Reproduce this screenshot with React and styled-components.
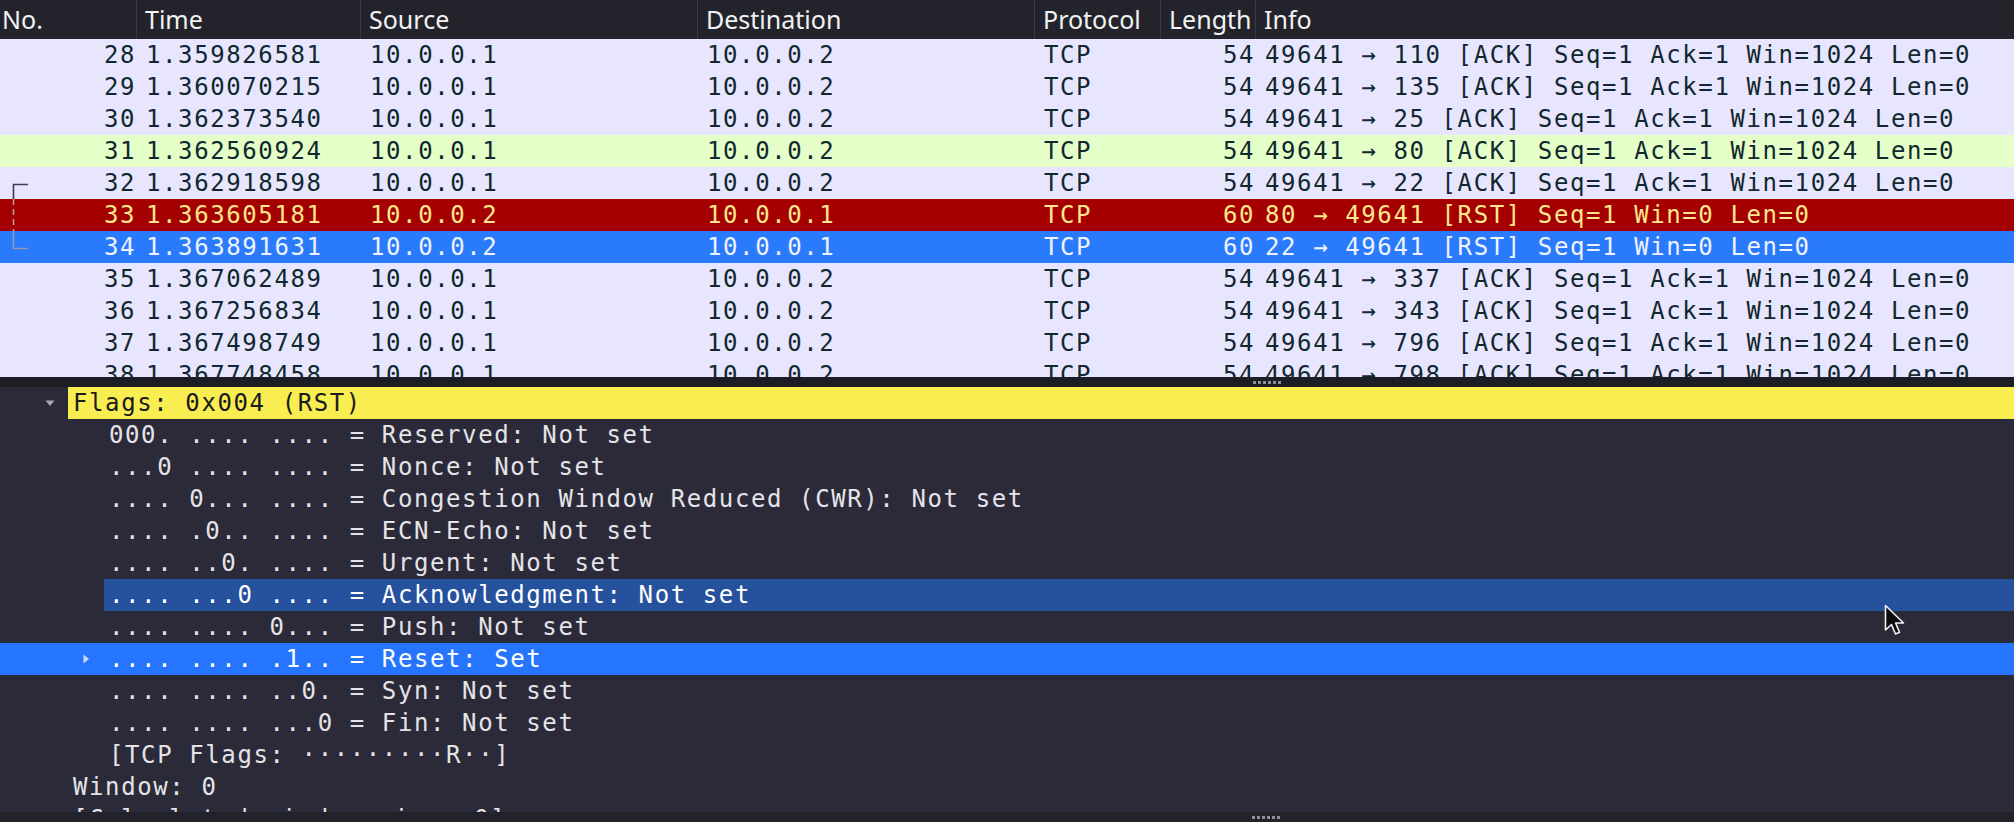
import React from 'react';
import styled, { createGlobalStyle } from 'styled-components';

const MONO = `"DejaVu Sans Mono", "Liberation Mono", monospace`;
const SANS = `"Noto Sans", "Open Sans", sans-serif`;
const COLUMNS = '136px 224px 337px 337px 126px 95px 1fr';

const TONES = {
  tcp: { bg: '#e7e6fe', fg: '#12272e' },
  http: { bg: '#e4ffc7', fg: '#12272e' },
  rst: { bg: '#a40000', fg: '#fde68e' },
  selected: { bg: '#2a7afd', fg: '#eef3ff' },
};

const packets = [
  { no: 28, time: '1.359826581', port: 110 },
  { no: 29, time: '1.360070215', port: 135 },
  { no: 30, time: '1.362373540', port: 25 },
  { no: 31, time: '1.362560924', port: 80, tone: 'http' },
  { no: 32, time: '1.362918598', port: 22, mark: 'start' },
  {
    no: 33, time: '1.363605181', src: '10.0.0.2', dst: '10.0.0.1', len: 60,
    info: '80 → 49641 [RST] Seq=1 Win=0 Len=0', tone: 'rst', mark: 'mid',
  },
  {
    no: 34, time: '1.363891631', src: '10.0.0.2', dst: '10.0.0.1', len: 60,
    info: '22 → 49641 [RST] Seq=1 Win=0 Len=0', tone: 'selected', mark: 'end',
  },
  { no: 35, time: '1.367062489', port: 337 },
  { no: 36, time: '1.367256834', port: 343 },
  { no: 37, time: '1.367498749', port: 796 },
  { no: 38, time: '1.367748458', port: 798 },
];

const tree = [
  { level: 1, text: 'Flags: 0x004 (RST)', open: true, mark: 'flag' },
  { level: 2, text: '000. .... .... = Reserved: Not set' },
  { level: 2, text: '...0 .... .... = Nonce: Not set' },
  { level: 2, text: '.... 0... .... = Congestion Window Reduced (CWR): Not set' },
  { level: 2, text: '.... .0.. .... = ECN-Echo: Not set' },
  { level: 2, text: '.... ..0. .... = Urgent: Not set' },
  { level: 2, text: '.... ...0 .... = Acknowledgment: Not set', mark: 'related' },
  { level: 2, text: '.... .... 0... = Push: Not set' },
  { level: 2, text: '.... .... .1.. = Reset: Set', closed: true, selected: true },
  { level: 2, text: '.... .... ..0. = Syn: Not set' },
  { level: 2, text: '.... .... ...0 = Fin: Not set' },
  { level: 2, text: '[TCP Flags: ·········R··]' },
  { level: 1, text: 'Window: 0' },
  { level: 1, text: '[Calculated window size: 0]' },
];

const GlobalStyle = createGlobalStyle`
  html, body {
    margin: 0;
    padding: 0;
    background: #2b2a39;
    overflow: hidden;
  }
`;

const Window = styled.div`
  position: relative;
  width: 2014px;
  height: 822px;
  display: flex;
  flex-direction: column;
  background: #2b2a39;
  overflow: hidden;
`;

const ListPane = styled.section`
  display: flex;
  flex-direction: column;
  height: 377px;
  background: #e7e6fe;
  overflow: hidden;
`;

const HeaderRow = styled.div`
  display: grid;
  grid-template-columns: ${COLUMNS};
  height: 39px;
  flex-shrink: 0;
  background: #23242b;
`;

const HeaderCell = styled.div`
  font-family: ${SANS};
  font-size: 25px;
  line-height: 39px;
  color: #f2f2f4;
  padding-left: ${(p) => (p.$first ? '2px' : '8px')};
  border-left: ${(p) => (p.$first ? 'none' : '1px solid #393a44')};
  white-space: nowrap;
  overflow: hidden;
`;

const PacketRow = styled.div`
  display: grid;
  grid-template-columns: ${COLUMNS};
  height: 32px;
  flex-shrink: 0;
  background: ${(p) => TONES[p.$tone].bg};
  color: ${(p) => TONES[p.$tone].fg};
  font-family: ${MONO};
  font-size: 24px;
  letter-spacing: 1.6px;
  line-height: 32px;
`;

const Cell = styled.div`
  position: relative;
  white-space: pre;
  overflow: hidden;
  text-align: ${(p) => (p.$right ? 'right' : 'left')};
  padding-left: ${(p) => (p.$right ? '0' : '10px')};
`;

const MarkSvg = styled.svg`
  position: absolute;
  left: 0;
  top: 0;
`;

const Splitter = styled.div`
  height: 10px;
  flex-shrink: 0;
  display: flex;
  align-items: center;
  padding-left: ${(p) => p.$grip}px;
  background: #1d1e24;
`;

const Grip = styled.div`
  display: flex;
  gap: 2px;
`;

const GripDot = styled.span`
  width: 3px;
  height: 3px;
  background: #8d8e96;
`;

const DetailPane = styled.section`
  flex: 1;
  overflow: hidden;
  background: #2b2a39;
`;

const TreeRow = styled.div`
  display: flex;
  align-items: center;
  height: 32px;
  padding-left: ${(p) => p.$level * 36}px;
  background: ${(p) => (p.$selected ? '#2575fe' : 'transparent')};
`;

const Expander = styled.div`
  width: 32px;
  height: 32px;
  flex-shrink: 0;
  display: flex;
  align-items: center;
  padding-left: 8px;
  box-sizing: border-box;
`;

const Label = styled.div`
  flex: 1;
  height: 32px;
  padding-left: 5px;
  font-family: ${MONO};
  font-size: 24px;
  letter-spacing: 1.6px;
  line-height: 32px;
  white-space: pre;
  background: ${(p) => (p.$mark === 'flag' ? '#f8ee52' : p.$mark === 'related' ? '#26519d' : 'transparent')};
  color: ${(p) => (p.$mark === 'flag' ? '#1b1b1b' : p.$selected || p.$mark ? '#ffffff' : '#e4e4e8')};
`;

const BottomBar = styled(Splitter)`
  background: #22232a;
`;

const Pointer = styled.svg`
  position: absolute;
  left: 1884px;
  top: 604px;
`;

const GripHandle = () => (
  <Grip>
    {[0, 1, 2, 3, 4, 5].map((i) => (
      <GripDot key={i} />
    ))}
  </Grip>
);

const RelatedMark = ({ kind }) => {
  if (kind === 'start') {
    return (
      <MarkSvg width="34" height="32">
        <path d="M28 17.5 H13.5 V32" fill="none" stroke="#3d3e49" strokeWidth="1.6" />
      </MarkSvg>
    );
  }
  if (kind === 'mid') {
    return (
      <MarkSvg width="34" height="32">
        <path d="M13.5 0 V32" fill="none" stroke="#b29a98" strokeWidth="1.6" strokeDasharray="6 4" />
      </MarkSvg>
    );
  }
  return (
    <MarkSvg width="34" height="32">
      <path d="M13.5 0 V17.5 H28" fill="none" stroke="#8f98ad" strokeWidth="1.6" />
    </MarkSvg>
  );
};

const Triangle = ({ open }) => (
  <svg width="12" height="12" viewBox="0 0 12 12">
    {open ? (
      <path d="M1.5 3.5 L10.5 3.5 L6 9 Z" fill="#a9a9b3" />
    ) : (
      <path d="M3.5 1.5 L9 6 L3.5 10.5 Z" fill="#c9d8ff" />
    )}
  </svg>
);

const headers = ['No.', 'Time', 'Source', 'Destination', 'Protocol', 'Length', 'Info'];

const App = () => (
  <>
    <GlobalStyle />
    <Window>
      <ListPane>
        <HeaderRow>
          {headers.map((h, i) => (
            <HeaderCell key={h} $first={i === 0}>
              {h}
            </HeaderCell>
          ))}
        </HeaderRow>
        {packets.map((p) => (
          <PacketRow key={p.no} $tone={p.tone || 'tcp'}>
            <Cell $right>
              {p.mark && <RelatedMark kind={p.mark} />}
              {p.no}
            </Cell>
            <Cell>{p.time}</Cell>
            <Cell>{p.src || '10.0.0.1'}</Cell>
            <Cell>{p.dst || '10.0.0.2'}</Cell>
            <Cell>TCP</Cell>
            <Cell $right>{p.len || 54}</Cell>
            <Cell>{p.info || `49641 → ${p.port} [ACK] Seq=1 Ack=1 Win=1024 Len=0`}</Cell>
          </PacketRow>
        ))}
      </ListPane>
      <Splitter $grip={1253}>
        <GripHandle />
      </Splitter>
      <DetailPane>
        {tree.map((t, i) => (
          <TreeRow key={i} $level={t.level} $selected={t.selected}>
            <Expander>
              {t.open && <Triangle open />}
              {t.closed && <Triangle />}
            </Expander>
            <Label $mark={t.mark} $selected={t.selected}>
              {t.text}
            </Label>
          </TreeRow>
        ))}
      </DetailPane>
      <BottomBar $grip={1252}>
        <GripHandle />
      </BottomBar>
      <Pointer width="24" height="34" viewBox="0 0 24 34">
        <path
          d="M1.5 1.5 L1.5 26 L7.5 20.5 L11.5 30 L15.5 28.3 L11.6 19 L19.5 19 Z"
          fill="#0d0d0d"
          stroke="#f2f2f2"
          strokeWidth="1.6"
          strokeLinejoin="round"
        />
      </Pointer>
    </Window>
  </>
);

export default App;
